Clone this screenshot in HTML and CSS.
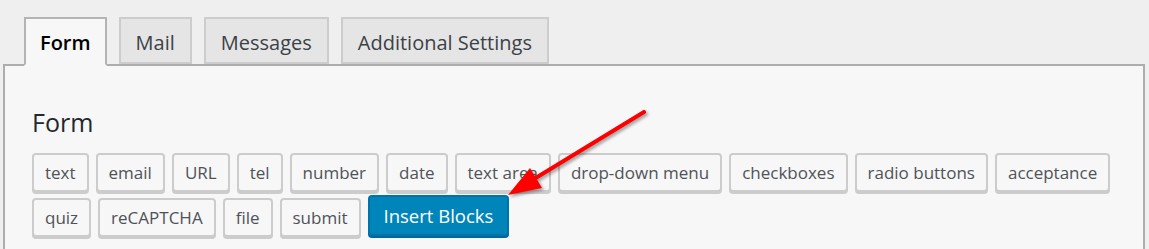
FILE: index.html
```html
<!DOCTYPE html>
<html lang="en">
<head>
    <meta charset="UTF-8">
    <meta name="viewport" content="width=device-width, initial-scale=1.0">
    <title>Contact Form - Edit</title>
    <link rel="stylesheet" href="styles.css">
</head>
<body>
    <div class="tabs">
        <div class="tab active">Form</div>
        <div class="tab">Mail</div>
        <div class="tab">Messages</div>
        <div class="tab">Additional Settings</div>
    </div>

    <div class="panel">
        <h2 class="panel-title">Form</h2>
        <div class="tag-buttons">
            <button class="tag-button">text</button>
            <button class="tag-button">email</button>
            <button class="tag-button">URL</button>
            <button class="tag-button">tel</button>
            <button class="tag-button">number</button>
            <button class="tag-button">date</button>
            <button class="tag-button">text area</button>
            <button class="tag-button">drop-down menu</button>
            <button class="tag-button">checkboxes</button>
            <button class="tag-button">radio buttons</button>
            <button class="tag-button">acceptance</button>
            <button class="tag-button">quiz</button>
            <button class="tag-button">reCAPTCHA</button>
            <button class="tag-button">file</button>
            <button class="tag-button">submit</button>
            <button class="tag-button primary">Insert Blocks</button>
        </div>
    </div>

    <!-- annotation arrow pointing at the new button -->
    <svg class="arrow" width="170" height="110" viewBox="0 0 170 110">
        <line x1="154" y1="12" x2="44" y2="79" stroke="#ff0000" stroke-width="4" stroke-linecap="round"/>
        <polygon points="18,95 52,88 40,68" fill="#ff0000"/>
    </svg>
</body>
</html>
```

FILE: styles.css
```css
:root {
    --page-bg: #efefef;
    --panel-bg: #f7f7f7;
    --tab-bg: #e5e5e5;
    --tab-border: #cccccc;
    --panel-border: #adadad;
    --text-muted: #555555;
    --primary: #0085ba;
    --primary-border: #0073aa;
    --primary-shadow: #006799;
}

* {
    margin: 0;
    padding: 0;
    box-sizing: border-box;
    font-family: 'Open Sans', 'Noto Sans', sans-serif;
}

body {
    background-color: var(--page-bg);
    padding-top: 17px;
    position: relative;
    overflow: hidden;
}

.tabs {
    display: flex;
    gap: 12px;
    margin-left: 24px;
    position: relative;
    z-index: 1;
}

.tab {
    height: 47px;
    padding: 4px 15px 0;
    line-height: 39px;
    font-size: 20px;
    color: #3c4146;
    background-color: var(--tab-bg);
    border: 2px solid var(--tab-border);
}

.tab.active {
    color: #000;
    font-weight: 600;
    padding: 4px 14px 0;
    background-color: var(--panel-bg);
    border-color: #b4b4b4;
    border-bottom-color: var(--panel-bg);
    height: 49px;
    margin-bottom: -2px;
}

.panel {
    margin: 0 4px 0 3px;
    background-color: var(--panel-bg);
    border: 2px solid var(--panel-border);
    padding: 41px 27px 20px;
}

.panel-title {
    font-size: 25px;
    font-weight: 400;
    line-height: 30px;
    color: #23282d;
    margin-bottom: 16px;
}

.tag-buttons {
    display: flex;
    flex-wrap: wrap;
    align-items: flex-start;
    column-gap: 7px;
    row-gap: 6px;
}

.tag-button {
    height: 39px;
    padding: 0 11px;
    line-height: 35px;
    font-size: 17px;
    color: #4f5357;
    background-color: var(--panel-bg);
    border: 2px solid var(--tab-border);
    border-radius: 4px;
    box-shadow: 0 2px 0 var(--tab-border);
    cursor: pointer;
}

.tag-button.primary {
    height: 41px;
    margin-top: -3px;
    padding: 0 14px;
    font-size: 18.5px;
    color: #fff;
    background-color: var(--primary);
    border-color: var(--primary-border);
    box-shadow: 0 2px 0 var(--primary-shadow);
}

.arrow {
    position: absolute;
    left: 490px;
    top: 100px;
    filter: drop-shadow(2px 2px 1.5px rgba(0, 0, 0, 0.35));
}
```
